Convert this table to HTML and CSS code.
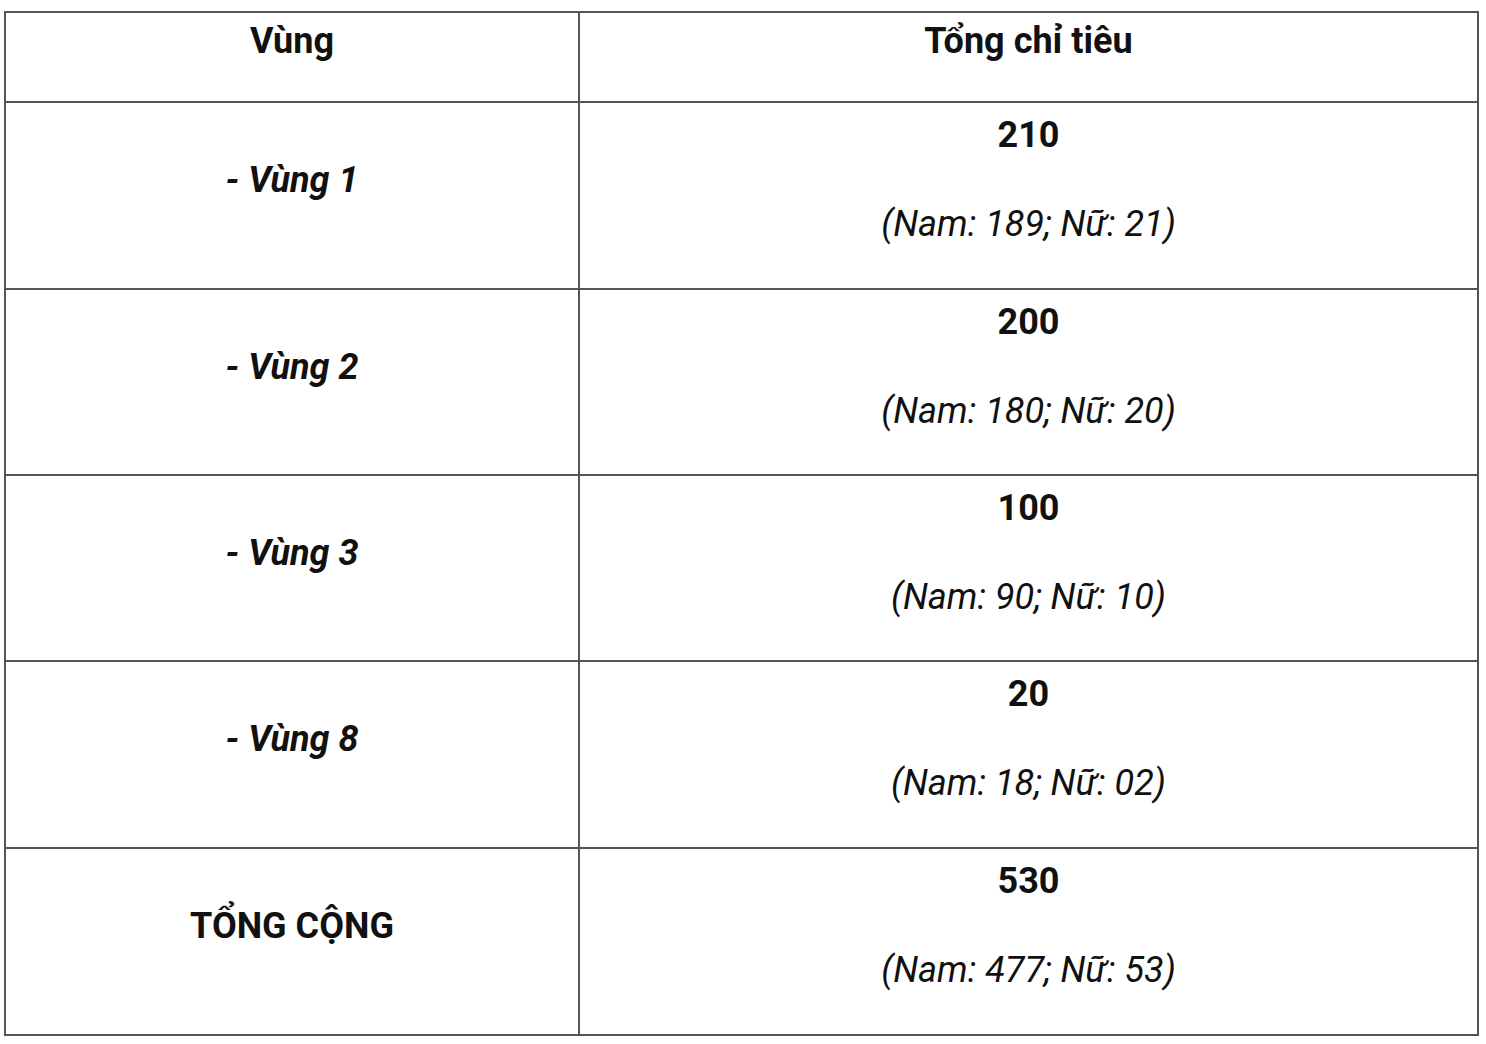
FILE: index.html
```html
<!DOCTYPE html>
<html lang="vi">
<head>
<meta charset="utf-8">
<title>Chỉ tiêu</title>
<link rel="stylesheet" href="styles.css">
</head>
<body>
<div class="table">
  <div class="cell head">Vùng</div>
  <div class="cell head">Tổng chỉ tiêu</div>

  <div class="cell region r1">- Vùng 1</div>
  <div class="cell total r1"><p class="num">210</p><p class="split">(Nam: 189; Nữ: 21)</p></div>

  <div class="cell region r2">- Vùng 2</div>
  <div class="cell total r2"><p class="num">200</p><p class="split">(Nam: 180; Nữ: 20)</p></div>

  <div class="cell region r3">- Vùng 3</div>
  <div class="cell total r3"><p class="num">100</p><p class="split">(Nam: 90; Nữ: 10)</p></div>

  <div class="cell region r4">- Vùng 8</div>
  <div class="cell total r4"><p class="num">20</p><p class="split">(Nam: 18; Nữ: 02)</p></div>

  <div class="cell region sum r5">TỔNG CỘNG</div>
  <div class="cell total r5"><p class="num">530</p><p class="split">(Nam: 477; Nữ: 53)</p></div>
</div>
</body>
</html>
```

FILE: styles.css
```css
html, body {
  margin: 0;
  padding: 0;
  background: #ffffff;
}

body {
  font-family: Roboto, "Liberation Sans", sans-serif;
  font-size: 36px;
  line-height: 42px;
  color: #111111;
}

.table {
  margin: 11px 0 0 4px;
  width: 1475px;
  box-sizing: border-box;
  display: grid;
  grid-template-columns: 574px 899px;
  grid-template-rows: 90px 187px 186px 186px 187px 187px;
  border-top: 2px solid #555555;
  border-left: 2px solid #555555;
}

.cell {
  box-sizing: border-box;
  border-right: 2px solid #555555;
  border-bottom: 2px solid #555555;
  text-align: center;
}

.cell p {
  margin: 0;
}

.head {
  font-weight: 700;
  padding-top: 7px;
}

.region {
  font-weight: 700;
  font-style: italic;
  padding-top: 56px;
}

.region.sum {
  font-style: normal;
}

.total {
  padding-top: 11px;
}

.num {
  font-weight: 700;
}

.split {
  font-style: italic;
  margin-top: 47px !important;
}
```
